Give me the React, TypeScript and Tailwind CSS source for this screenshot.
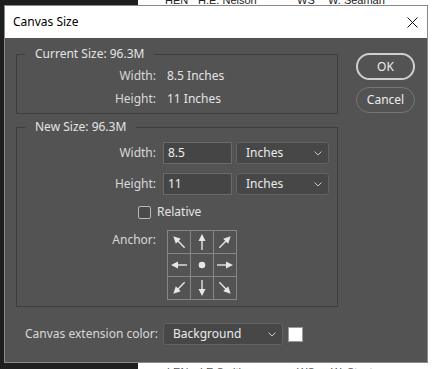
import React from 'react'

const font = { fontFamily: '"Noto Sans", "Open Sans", sans-serif' }

// ------------- small drawings -------------
function Chevron() {
  return (
    <svg width="8" height="5" viewBox="0 0 8 5" className="shrink-0">
      <path d="M0.5 0.5 L4 4 L7.5 0.5" fill="none" stroke="#c8c8c8" strokeWidth="1" />
    </svg>
  )
}

function Arrow({ angle }: { angle: number }) {
  return (
    <svg width="22" height="22" viewBox="0 0 22 22">
      <g transform={`rotate(${angle} 11 11)`}>
        <line x1="11" y1="9" x2="11" y2="19" stroke="#e6e6e6" strokeWidth="1.4" />
        <polygon points="11,3 7.5,10 14.5,10" fill="#e6e6e6" />
      </g>
    </svg>
  )
}

function Dot() {
  return (
    <svg width="22" height="22" viewBox="0 0 22 22">
      <circle cx="11" cy="11" r="3.3" fill="#e6e6e6" />
    </svg>
  )
}

function Select({ value, width }: { value: string; width: string }) {
  return (
    <div
      className={`${width} h-[22px] flex items-center justify-between pl-[9px] pr-[6px] rounded-[3px] bg-[#474747] border border-[#626262] text-[#ececec]`}
    >
      <span>{value}</span>
      <Chevron />
    </div>
  )
}

function Input({ value }: { value: string }) {
  return (
    <div className="w-[69px] h-[22px] flex items-center pl-[4px] bg-[#454545] border border-[#6a6a6a] text-[#f0f0f0]">
      {value}
    </div>
  )
}

// ------------- dialog -------------
function CanvasSizeDialog() {
  const anchors = [-45, 0, 45, -90, null, 90, -135, 180, 135]

  return (
    <div
      style={font}
      className="absolute left-[4px] top-[5px] w-[424px] h-[358px] flex flex-col border border-[#8a8a8a] bg-[#535353] text-[12px] text-[#d9d9d9]"
    >
      {/* Title bar */}
      <div className="h-[32px] shrink-0 flex items-center justify-between bg-white pl-[8px] pr-[9px] text-black">
        <span>Canvas Size</span>
        <svg width="11" height="11" viewBox="0 0 11 11">
          <path d="M0.5 0.5 L10.5 10.5 M10.5 0.5 L0.5 10.5" stroke="#111" strokeWidth="1" />
        </svg>
      </div>

      {/* Body */}
      <div className="flex pl-[11px] pt-[8px]">
        <div className="w-[322px] flex flex-col">
          {/* Current Size */}
          <fieldset className="border border-[#3d3d3d] pb-[3px]">
            <legend className="ml-[8px] px-[10px] leading-[16px] text-[#e4e4e4]">Current Size: 96.3M</legend>
            <div className="grid grid-cols-[139px_auto] gap-x-[11px] leading-[23px] pt-[2px]">
              <span className="text-right">Width:</span>
              <span className="text-[#e4e4e4]">8.5 Inches</span>
              <span className="text-right">Height:</span>
              <span className="text-[#e4e4e4]">11 Inches</span>
            </div>
          </fieldset>

          {/* New Size */}
          <fieldset className="mt-[5px] border border-[#3d3d3d] pb-[6px]">
            <legend className="ml-[8px] px-[10px] leading-[16px] text-[#e4e4e4]">New Size: 96.3M</legend>
            <div className="flex flex-col pt-[7px]">
              <div className="flex items-center">
                <span className="w-[139px] text-right">Width:</span>
                <div className="ml-[7px] flex items-center gap-[4px]">
                  <Input value="8.5" />
                  <Select value="Inches" width="w-[93px]" />
                </div>
              </div>
              <div className="flex items-center mt-[9px]">
                <span className="w-[139px] text-right">Height:</span>
                <div className="ml-[7px] flex items-center gap-[4px]">
                  <Input value="11" />
                  <Select value="Inches" width="w-[93px]" />
                </div>
              </div>
              <div className="flex items-center mt-[9px] ml-[121px] h-[16px]">
                <span className="w-[13px] h-[13px] rounded-[2px] border border-[#b8b8b8] bg-[#4a4a4a]" />
                <span className="ml-[6px] text-[#e4e4e4]">Relative</span>
              </div>
              <div className="flex items-start mt-[10px]">
                <span className="w-[139px] text-right pt-[1px]">Anchor:</span>
                <div className="ml-[11px] grid grid-cols-3 gap-px p-px bg-[#868686]">
                  {anchors.map((a, i) => (
                    <div key={i} className="w-[22px] h-[22px] bg-[#535353] flex items-center justify-center">
                      {a === null ? <Dot /> : <Arrow angle={a} />}
                    </div>
                  ))}
                </div>
              </div>
            </div>
          </fieldset>
        </div>

        {/* Buttons */}
        <div className="ml-[18px] mt-[7px] flex flex-col gap-[7px] text-[#ececec]">
          <button className="w-[59px] h-[27px] rounded-full border-2 border-[#cfcfcf] text-[12px]">OK</button>
          <button className="w-[59px] h-[26px] rounded-full border border-[#767676] text-[12px]">Cancel</button>
        </div>
      </div>

      {/* Canvas extension color */}
      <div className="flex items-center mt-[16px] pl-[20px]">
        <span>Canvas extension color:</span>
        <div className="ml-[5px]">
          <Select value="Background" width="w-[120px]" />
        </div>
        <span className="ml-[5px] w-[15px] h-[15px] bg-white border border-[#9a9a9a]" />
      </div>
    </div>
  )
}

export default function App() {
  return (
    <div className="relative w-[434px] h-[369px] overflow-hidden flex">
      {/* Desktop behind the dialog */}
      <div className="w-[138px] h-full bg-[#1f1f1f]" />
      <div
        className="flex-1 h-full bg-white flex flex-col justify-between text-[11px] text-[#222]"
        style={{ fontFamily: '"Liberation Sans", Arial, sans-serif' }}
      >
        <div className="-mt-[8px] flex pl-[27px]">
          <span className="w-[33px]">HEN</span>
          <span className="w-[99px]">H.E. Nelson</span>
          <span className="w-[31px]">WS</span>
          <span>W. Seaman</span>
        </div>
        <div className="-mb-[11px] flex pl-[29px] text-[#555]">
          <span className="w-[33px]">LEN</span>
          <span className="w-[97px]">LE Smith</span>
          <span className="w-[34px]">WS</span>
          <span>W. Stanton</span>
        </div>
      </div>

      <CanvasSizeDialog />
    </div>
  )
}
